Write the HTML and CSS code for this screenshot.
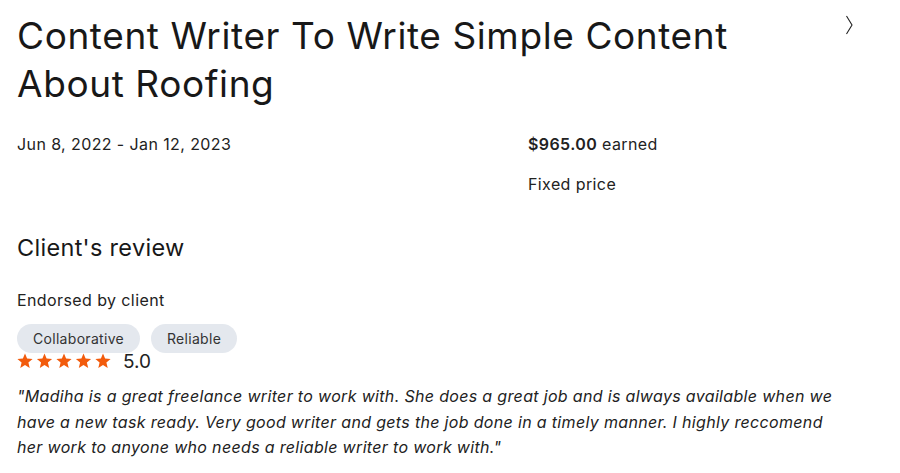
FILE: index.html
```html
<!DOCTYPE html>
<html lang="en">
    <head>
        <meta charset="UTF-8" />
        <meta name="viewport" content="width=device-width, initial-scale=1.0" />
        <title>Content Writer To Write Simple Content About Roofing</title>
        <link rel="stylesheet" href="styles.css">
    </head>
    <body>
        <div class="job">
            <div class="job-head">
                <h1>Content Writer To Write Simple Content About Roofing</h1>
                <button class="next" aria-label="Next">
                    <svg width="8" height="22" viewBox="0 0 8 22">
                        <path d="M1.5 2 L7 11 L1.5 20" fill="none" stroke="#222" stroke-width="1.1" />
                    </svg>
                </button>
            </div>

            <div class="job-info">
                <div class="dates">Jun 8, 2022 - Jan 12, 2023</div>
                <div class="money">
                    <div><strong>$965.00</strong> earned</div>
                    <div>Fixed price</div>
                </div>
            </div>

            <h2>Client's review</h2>
            <div class="endorsed">Endorsed by client</div>
            <div class="chips">
                <span class="chip">Collaborative</span>
                <span class="chip">Reliable</span>
            </div>
            <div class="rating">
                <div class="stars">
                    <svg width="94" height="16" viewBox="0 0 94 16">
                        <defs>
                            <path id="star" d="M8 0.5 L10.1 5.6 L15.6 6 L11.4 9.6 L12.7 15 L8 12.1 L3.3 15 L4.6 9.6 L0.4 6 L5.9 5.6 Z" />
                        </defs>
                        <use href="#star" x="0" fill="#f25b0c" />
                        <use href="#star" x="19.5" fill="#f25b0c" />
                        <use href="#star" x="39" fill="#f25b0c" />
                        <use href="#star" x="58.5" fill="#f25b0c" />
                        <use href="#star" x="78" fill="#f25b0c" />
                    </svg>
                </div>
                <span class="score">5.0</span>
            </div>
            <p class="quote">"Madiha is a great freelance writer to work with. She does a great job and is always available when we have a new task ready. Very good writer and gets the job done in a timely manner. I highly reccomend her work to anyone who needs a reliable writer to work with."</p>
        </div>
    </body>
</html>
```

FILE: styles.css
```css
body {
    font-family: Inter, "Liberation Sans", sans-serif;
    margin: 0;
    padding: 0;
    background-color: #fff;
    color: #222;
    letter-spacing: 0.4px;
}

.job {
    padding: 12px 17px 0;
    width: 840px;
}

.job-head {
    display: flex;
    justify-content: space-between;
    align-items: flex-start;
}

.job-head h1 {
    margin: 0;
    font-size: 37px;
    line-height: 48px;
    font-weight: normal;
    letter-spacing: 0.6px;
    color: #181818;
    width: 740px;
}

.next {
    border: none;
    background: none;
    padding: 0;
    margin: 2px 4px 0 0;
    cursor: pointer;
}

.next svg {
    display: block;
}

.job-info {
    display: flex;
    margin-top: 24px;
    font-size: 16px;
    line-height: 24px;
}

.dates {
    width: 511px;
}

.money div + div {
    margin-top: 16px;
}

.money strong {
    font-weight: 600;
}

h2 {
    margin: 37px 0 0;
    font-size: 23.5px;
    line-height: 30px;
    font-weight: normal;
    letter-spacing: 0.3px;
    color: #181818;
}

.endorsed {
    margin-top: 25px;
    font-size: 16px;
    line-height: 24px;
}

.chips {
    display: flex;
    gap: 11px;
    margin-top: 12px;
}

.chip {
    background-color: #e4e8ee;
    border-radius: 15px;
    padding: 0 16px;
    height: 29px;
    line-height: 29px;
    font-size: 14px;
    letter-spacing: 0.3px;
    color: #333;
}

.rating {
    display: flex;
    align-items: center;
    height: 16px;
    gap: 12px;
}

.stars svg {
    display: block;
}

.score {
    font-size: 19px;
    letter-spacing: 0;
    color: #222;
}

.quote {
    margin: 15px 0 0;
    max-width: 826px;
    font-size: 16px;
    line-height: 25.5px;
    font-style: italic;
    letter-spacing: 0.33px;
    color: #222;
}
```
